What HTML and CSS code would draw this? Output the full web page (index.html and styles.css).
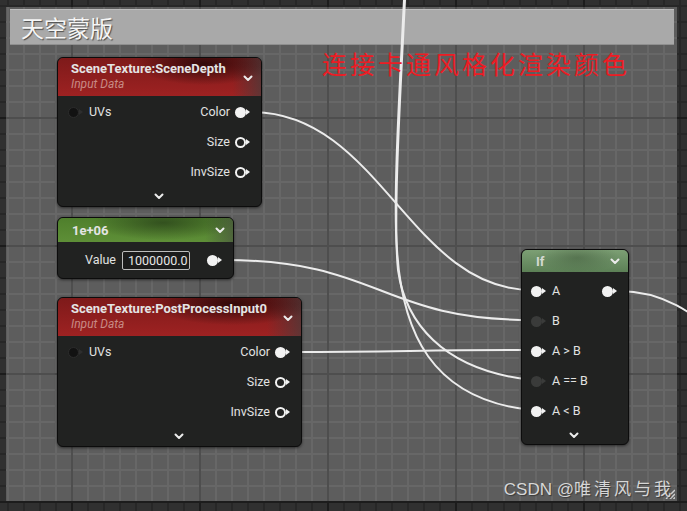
FILE: index.html
```html
<!DOCTYPE html>
<html lang="zh-CN">
<head>
<meta charset="utf-8">
<title>天空蒙版</title>
<link rel="stylesheet" href="styles.css">
</head>
<body>
<div class="canvas">
  <div class="comment">
    <div class="comment-head">天空蒙版</div>
    <svg class="grip" width="12" height="12" viewBox="0 0 12 12">
      <path d="M3 12 12 3M7 12 12 7M10.5 12 12 10.5" />
    </svg>
  </div>

  <svg class="wires" width="687" height="511" viewBox="0 0 687 511">
    <path d="M251 112 C380 112 410 290 532 290" />
    <path d="M224 260 C380 260 380 320 532 320" />
    <path d="M291 352 C400 352 420 350 532 350" />
    <path d="M405 0 C400 100 393 220 398 270 C405 320 440 370 532 380" />
    <path d="M404 0 C399 100 393 200 397 250 C402 330 430 400 532 410" />
    <path d="M619 291 C670 291 700 320 740 350" />
  </svg>

  <div class="note">连接卡通风格化渲染颜色</div>

  <div class="node n-depth">
    <div class="head red tall">
      <div class="titles">
        <div class="title">SceneTexture:SceneDepth</div>
        <div class="sub">Input Data</div>
      </div>
      <svg class="chev" width="10" height="7" viewBox="0 0 10 7"><path d="M1.5 1.5 5 5 8.5 1.5"/></svg>
    </div>
    <div class="body">
      <div class="row split">
        <span class="side"><span class="pin dark"></span><span class="lbl">UVs</span></span>
        <span class="side"><span class="lbl">Color</span><span class="pin fill"></span></span>
      </div>
      <div class="row end"><span class="lbl">Size</span><span class="pin ring"></span></div>
      <div class="row end"><span class="lbl">InvSize</span><span class="pin ring"></span></div>
      <div class="more"><svg class="chev" width="10" height="7" viewBox="0 0 10 7"><path d="M1.5 1.5 5 5 8.5 1.5"/></svg></div>
    </div>
  </div>

  <div class="node n-const">
    <div class="head green short">
      <div class="title">1e+06</div>
      <svg class="chev" width="10" height="7" viewBox="0 0 10 7"><path d="M1.5 1.5 5 5 8.5 1.5"/></svg>
    </div>
    <div class="body pad-const">
      <div class="row end">
        <span class="lbl">Value</span>
        <span class="field">1000000.0</span>
        <span class="pin fill far"></span>
      </div>
    </div>
  </div>

  <div class="node n-post">
    <div class="head red tall">
      <div class="titles">
        <div class="title">SceneTexture:PostProcessInput0</div>
        <div class="sub">Input Data</div>
      </div>
      <svg class="chev" width="10" height="7" viewBox="0 0 10 7"><path d="M1.5 1.5 5 5 8.5 1.5"/></svg>
    </div>
    <div class="body">
      <div class="row split">
        <span class="side"><span class="pin dark"></span><span class="lbl">UVs</span></span>
        <span class="side"><span class="lbl">Color</span><span class="pin fill"></span></span>
      </div>
      <div class="row end"><span class="lbl">Size</span><span class="pin ring"></span></div>
      <div class="row end"><span class="lbl">InvSize</span><span class="pin ring"></span></div>
      <div class="more"><svg class="chev" width="10" height="7" viewBox="0 0 10 7"><path d="M1.5 1.5 5 5 8.5 1.5"/></svg></div>
    </div>
  </div>

  <div class="node n-if">
    <div class="head lgreen slim">
      <div class="title soft">If</div>
      <svg class="chev" width="10" height="7" viewBox="0 0 10 7"><path d="M1.5 1.5 5 5 8.5 1.5"/></svg>
    </div>
    <div class="body pad-if">
      <div class="row split in">
        <span class="side"><span class="pin fill"></span><span class="lbl">A</span></span>
        <span class="pin fill"></span>
      </div>
      <div class="row in"><span class="pin dim"></span><span class="lbl">B</span></div>
      <div class="row in"><span class="pin fill"></span><span class="lbl">A &gt; B</span></div>
      <div class="row in"><span class="pin dim"></span><span class="lbl">A == B</span></div>
      <div class="row in"><span class="pin fill"></span><span class="lbl">A &lt; B</span></div>
      <div class="more short"><svg class="chev" width="10" height="7" viewBox="0 0 10 7"><path d="M1.5 1.5 5 5 8.5 1.5"/></svg></div>
    </div>
  </div>

  <div class="watermark">CSDN @<span class="cjk">唯清风与我</span></div>
</div>
</body>
</html>
```

FILE: styles.css
```css
html, body {
  margin: 0;
  padding: 0;
  background: #262626;
}

.canvas {
  position: relative;
  display: flow-root;
  width: 687px;
  height: 511px;
  overflow: hidden;
  background-color: #303030;
  background-image:
    linear-gradient(to right, #1c1c1c 0 2px, transparent 2px),
    linear-gradient(to bottom, #1c1c1c 0 2px, transparent 2px),
    linear-gradient(to right, #272727 0 2px, transparent 2px),
    linear-gradient(to bottom, #272727 0 2px, transparent 2px);
  background-size: 128px 128px, 128px 128px, 16px 16px, 16px 16px;
  background-position: 71px 0, 0 117px, 7px 0, 0 5px;
  font-family: Roboto, "Liberation Sans", sans-serif;
}

/* comment box */
.comment {
  position: relative;
  box-sizing: border-box;
  width: 671px;
  height: 494px;
  margin: 7px 10px 10px 6px;
  padding: 2px 3px 0 4px;
  background-color: #5d5d5d;
  background-image:
    linear-gradient(to right, #4e4e4e 0 2px, transparent 2px),
    linear-gradient(to bottom, #4e4e4e 0 2px, transparent 2px),
    linear-gradient(to right, #676767 0 2px, transparent 2px),
    linear-gradient(to bottom, #676767 0 2px, transparent 2px);
  background-size: 128px 128px, 128px 128px, 16px 16px, 16px 16px;
  background-position: 65px 0, 0 110px, 1px 0, 0 14px;
}

.comment-head {
  box-sizing: border-box;
  height: 36px;
  padding-left: 11px;
  background: #a9a9a9;
  border-top: 1px solid #bdbdbd;
  border-bottom: 1px solid #8f8f8f;
  color: #f6f6f6;
  font-family: "Noto Sans CJK SC", sans-serif;
  font-size: 23px;
  line-height: 34px;
  text-shadow: 1px 1px 1px #4c4c4c;
}

.grip {
  position: absolute;
  right: 2px;
  bottom: 2px;
}
.grip path {
  stroke: #d0d0d0;
  stroke-width: 1.5;
  fill: none;
}

/* wires */
.wires {
  position: absolute;
  left: 0;
  top: 0;
  z-index: 1;
}
.wires path {
  fill: none;
  stroke: #ececec;
  stroke-width: 2;
}

/* red annotation */
.note {
  position: absolute;
  left: 322px;
  top: 51px;
  z-index: 3;
  color: #ec1c24;
  font-family: "Noto Sans CJK SC", sans-serif;
  font-size: 25px;
  line-height: 25px;
  letter-spacing: 3px;
  white-space: nowrap;
}

/* nodes */
.node {
  position: absolute;
  z-index: 2;
  box-sizing: border-box;
  background: #212221;
  border: 1px solid #0c0c0c;
  border-radius: 6px;
  box-shadow: 0 1px 3px rgba(0, 0, 0, 0.55);
  overflow: hidden;
  color: #e0e0e0;
}
.n-depth { left: 57px; top: 57px; width: 205px; }
.n-const { left: 57px; top: 217px; width: 177px; }
.n-post  { left: 57px; top: 297px; width: 245px; }
.n-if    { left: 521px; top: 249px; width: 108px; }

.head {
  display: flex;
  align-items: center;
  justify-content: space-between;
  box-sizing: border-box;
  padding: 0 8px 0 13px;
}
.head.tall { height: 38px; align-items: flex-start; padding-top: 3px; }
.head.tall .chev { margin-top: 14px; }
.head.short { height: 24px; padding-left: 14px; }
.head.slim { height: 22px; padding-left: 14px; }

.head.red {
  background:
    radial-gradient(ellipse 45% 75% at 72% 15%, rgba(22, 4, 4, 0.75), rgba(22, 4, 4, 0) 75%),
    linear-gradient(to left, rgba(70, 60, 60, 0.7), rgba(70, 60, 60, 0) 14%),
    linear-gradient(to bottom, #7e1a1a, #9e2222);
}
.head.green {
  background:
    radial-gradient(ellipse 50% 90% at 60% 20%, rgba(30, 48, 20, 0.6), rgba(30, 48, 20, 0) 80%),
    linear-gradient(to left, rgba(70, 75, 65, 0.6), rgba(70, 75, 65, 0) 16%),
    linear-gradient(to bottom, #4f7f2c, #5e8f37);
}
.head.lgreen {
  background:
    radial-gradient(ellipse 50% 85% at 52% 35%, rgba(55, 78, 50, 0.45), rgba(55, 78, 50, 0) 80%),
    linear-gradient(to bottom, #7c9f74, #5c8056);
}

.title {
  font-weight: 700;
  font-size: 13px;
  line-height: 15px;
  color: #e4e4e4;
  white-space: nowrap;
}
.title.soft { color: #d4dad2; font-size: 13px; }
.sub {
  margin-top: 1px;
  font-style: italic;
  font-size: 12px;
  line-height: 15px;
  color: #c88a84;
}

.chev { flex: none; display: block; }
.chev path {
  fill: none;
  stroke: #ececec;
  stroke-width: 2;
  stroke-linecap: round;
  stroke-linejoin: round;
}

.body {
  display: flex;
  flex-direction: column;
  padding: 1px 11px 0 10px;
}
.body.pad-const { padding: 3px 11px 3px 10px; }
.body.pad-if { padding: 4px 11px 0 9px; }

.row {
  display: flex;
  align-items: center;
  height: 30px;
  gap: 5px;
}
.row.split { justify-content: space-between; }
.row.end { justify-content: flex-end; }
.row.in { gap: 6px; }
.side {
  display: flex;
  align-items: center;
  gap: 5px;
}
.row.split .side:first-child { gap: 6px; }

.lbl {
  font-size: 12.5px;
  line-height: 14px;
  color: #e2e2e2;
  white-space: nowrap;
}

.field {
  box-sizing: border-box;
  width: 68px;
  height: 19px;
  margin-left: 1px;
  padding-left: 5px;
  border: 1px solid #bdbdbd;
  border-radius: 2px;
  background: #1b1b1b;
  font-size: 12.5px;
  line-height: 17px;
  color: #e6e6e6;
}
.pin.far { margin-left: 12px; }

.more {
  display: flex;
  justify-content: center;
  align-items: center;
  height: 19px;
}
.more.short { height: 18px; }

/* pins */
.pin {
  flex: none;
  display: inline-flex;
  align-items: center;
  width: 15px;
  height: 11px;
}
.pin::before {
  content: "";
  box-sizing: border-box;
  width: 11px;
  height: 11px;
  border-radius: 50%;
  background: #f2f2f2;
}
.pin::after {
  content: "";
  width: 0;
  height: 0;
  border-left: 4px solid #f2f2f2;
  border-top: 3px solid transparent;
  border-bottom: 3px solid transparent;
}
.pin.ring::before {
  background: transparent;
  border: 2px solid #f2f2f2;
}
.pin.dark::before {
  background: #121212;
  border: 1px solid #2c2c2c;
}
.pin.dark::after { border-left-color: #2e2e2e; }
.pin.dim::before { background: #3a3b3a; }
.pin.dim::after { border-left-color: #3a3b3a; }

/* watermark */
.watermark {
  position: absolute;
  right: 13px;
  bottom: 11px;
  z-index: 3;
  font-family: "Liberation Sans", "Noto Sans CJK SC", sans-serif;
  font-size: 17px;
  line-height: 20px;
  color: #d6d6d6;
  text-shadow: 1px 1px 1px #3a3a3a;
  white-space: nowrap;
}
.watermark .cjk {
  font-family: "Noto Sans CJK SC", sans-serif;
  letter-spacing: 3px;
}
```
